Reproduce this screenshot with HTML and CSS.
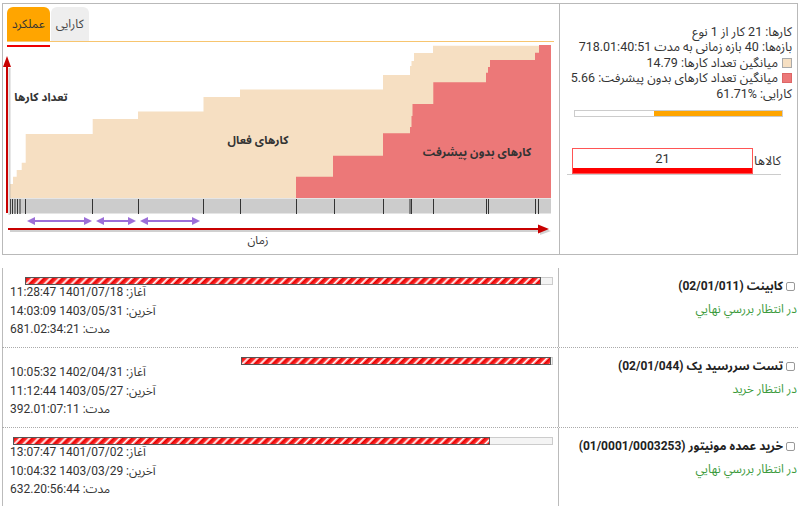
FILE: index.html
```html
<!DOCTYPE html>
<html lang="fa">
<head>
  <meta charset="UTF-8" />
  <meta name="viewport" content="width=device-width, initial-scale=1" />
  <title>عملکرد کارها</title>
  <link rel="stylesheet" href="styles.css">
</head>
<body>

  <div class="panel">
    <div class="chart-cell">
      <div class="tabs">
        <div class="tab active">عملکرد</div>
        <div class="tab">کارایی</div>
      </div>
      <svg class="chart" viewBox="3 42 556 208" width="556" height="208">
        <rect x="7" y="45" width="43" height="2" fill="#e00" />

        <!-- active jobs / jobs without progress -->
        <path class="area-active" d="M10 198V184H13V176.7H16.7V170H21.7V162.7H25.7V134H92.7V119H138V111.5H203.5V97H240V89.5H383V75H410V66H411.5V61H414V53H433V45.7H551V198Z" />
        <path class="area-stalled" d="M296 198V176.7H333V155.7H383V133.3H410V127H411.5V116H412.5V104H433.3V82.3H486V72.7H488V67H490V60H535V52.7H539V45H551V198Z" />

        <!-- timeline -->
        <rect x="10" y="198.5" width="541" height="15" fill="#cccccc" />
        <path class="ticks" d="M10.5 199v15M12.5 199v15M15 199v15M17.5 199v15M20 199v15M25.5 199v15M92.5 199v15M138.5 199v15M203.5 199v15M240.5 199v15M296.5 199v15M334.5 199v15M383.5 199v15M410 199v15M411.5 199v15M433.5 199v15M486.5 199v15M488.5 199v15M535.5 199v15M538.5 199v15" />

        <!-- interval arrows -->
        <g class="interval">
          <path d="M33 221H86" />
          <polygon points="27,221 35,217 35,225" />
          <polygon points="92,221 84,217 84,225" />
          <path d="M102 221H130" />
          <polygon points="96,221 104,217 104,225" />
          <polygon points="136,221 128,217 128,225" />
          <path d="M146 221H194" />
          <polygon points="140,221 148,217 148,225" />
          <polygon points="200,221 192,217 192,225" />
        </g>

        <!-- axes -->
        <g class="axis-shadow">
          <path d="M9.5 68V215" />
          <path d="M10 231H540" />
          <polygon points="551,231 540,227 540,235" />
        </g>
        <g class="axis">
          <path d="M7 64V213" />
          <polygon points="7,56 3,67 11,67" />
          <path d="M8 229H540" />
          <polygon points="549,229 538,224.5 538,233.5" />
        </g>

        <text x="41" y="101">تعداد کارها</text>
        <text x="258" y="144">کارهای فعال</text>
        <text x="477" y="156">کارهای بدون پیشرفت</text>
        <text class="plain" x="258" y="244">زمان</text>
      </svg>
    </div>

    <div class="summary" dir="rtl">
      <div class="line">کارها: 21 کار از 1 نوع</div>
      <div class="line">بازه‌ها: 40 بازه زمانی به مدت 718.01:40:51</div>
      <div class="line"><span class="swatch active"></span>میانگین تعداد کارها: 14.79</div>
      <div class="line"><span class="swatch stalled"></span>میانگین تعداد کارهای بدون پیشرفت: 5.66</div>
      <div class="line">کارایی: %61.71</div>
      <div class="meter"><div class="meter-fill" style="width: 61.71%"></div></div>
      <div class="field">
        <label>کالاها</label>
        <input type="text" value="21" />
      </div>
    </div>
  </div>

  <div class="jobs">
    <div class="job">
      <div class="job-time">
        <div class="track">
          <div class="track-gap" style="width: 2.2%"></div>
          <div class="track-fill" style="width: 95.6%"></div>
          <div class="track-rest" style="width: 2.2%"></div>
        </div>
        <div class="dates" dir="rtl">
          <div>آغاز: 1401/07/18 11:28:47</div>
          <div>آخرین: 1403/05/31 14:03:09</div>
          <div>مدت: 681.02:34:21</div>
        </div>
      </div>
      <div class="job-info" dir="rtl">
        <div class="job-title"><input type="checkbox" />کابینت (02/01/011)</div>
        <div class="job-status">در انتظار بررسي نهايي</div>
      </div>
    </div>

    <div class="job">
      <div class="job-time">
        <div class="track">
          <div class="track-gap" style="width: 42.2%"></div>
          <div class="track-fill" style="width: 57.4%"></div>
          <div class="track-rest" style="width: 0.4%"></div>
        </div>
        <div class="dates" dir="rtl">
          <div>آغاز: 1402/04/31 10:05:32</div>
          <div>آخرین: 1403/05/27 11:12:44</div>
          <div>مدت: 392.01:07:11</div>
        </div>
      </div>
      <div class="job-info" dir="rtl">
        <div class="job-title"><input type="checkbox" />تست سررسید یک (02/01/044)</div>
        <div class="job-status">در انتظار خرید</div>
      </div>
    </div>

    <div class="job">
      <div class="job-time">
        <div class="track">
          <div class="track-fill" style="width: 88.3%"></div>
          <div class="track-rest" style="width: 11.7%"></div>
        </div>
        <div class="dates" dir="rtl">
          <div>آغاز: 1401/07/02 13:07:47</div>
          <div>آخرین: 1403/03/29 10:04:32</div>
          <div>مدت: 632.20:56:44</div>
        </div>
      </div>
      <div class="job-info" dir="rtl">
        <div class="job-title"><input type="checkbox" />خرید عمده مونیتور (01/0001/0003253)</div>
        <div class="job-status">در انتظار بررسي نهايي</div>
      </div>
    </div>
  </div>

</body>
</html>
```

FILE: styles.css
```css
body {
  margin: 0;
  padding: 3px 2px 0;
  font-family: Roboto, "Noto Sans Arabic", "DejaVu Sans", sans-serif;
  font-size: 12px;
  color: #333;
  background-color: #fff;
}

.panel {
  display: flex;
  border: 1px solid #b9b9b9;
}

.chart-cell {
  width: 552px;
  padding: 3px 0 4px 4px;
}

.tabs {
  display: flex;
  gap: 1px;
  margin-right: 5px;
  border-bottom: 1px solid #f7c56f;
}

.tab {
  height: 34px;
  line-height: 34px;
  padding: 0 5px;
  border-radius: 6px 6px 0 0;
  background-color: #eee;
  font-size: 12px;
  color: #444;
}

.tab.active {
  background-color: #ffa500;
  color: #333;
}

.chart {
  display: block;
  margin-left: -4px;
  overflow: visible;
}

.area-active {
  fill: #f6dfc2;
}

.area-stalled {
  fill: #ec7878;
}

.ticks {
  stroke: #333;
  stroke-width: 1;
}

.interval path {
  stroke: #9c6fd8;
  stroke-width: 2;
}

.interval polygon {
  fill: #9c6fd8;
}

.axis path {
  stroke: #c80000;
  stroke-width: 2;
}

.axis polygon {
  fill: #c80000;
}

.axis-shadow path {
  stroke: #999;
  stroke-width: 2;
  opacity: 0.45;
}

.axis-shadow polygon {
  fill: #999;
  opacity: 0.45;
}

.chart text {
  font-family: "Noto Sans Arabic", "DejaVu Sans", sans-serif;
  font-size: 11.5px;
  font-weight: bold;
  fill: #333;
  text-anchor: middle;
}

.chart text.plain {
  font-weight: normal;
}

.summary {
  flex: 1;
  border-left: 1px solid #b9b9b9;
  padding: 19.5px 5px 0;
  font-size: 12.5px;
}

.line {
  line-height: 15.5px;
  white-space: nowrap;
}

.swatch {
  display: inline-block;
  width: 8px;
  height: 8px;
  margin-left: 4px;
  border: 1px solid #aaa;
  vertical-align: -1px;
}

.swatch.active {
  background-color: #f6dfc2;
}

.swatch.stalled {
  background-color: #ec7878;
  border-color: #d66;
}

.meter {
  height: 5px;
  margin: 8.5px 9px 0;
  border: 1px solid #ccc;
  background-color: #fff;
}

.meter-fill {
  height: 100%;
  background-color: #ffa500;
}

.field {
  display: flex;
  align-items: flex-start;
  margin: 31px 11px 0 2px;
  border-bottom: 1px solid #ccc;
}

.field label {
  width: 28px;
  line-height: 26px;
  font-size: 12.5px;
}

.field input {
  width: 181px;
  height: 26px;
  box-sizing: border-box;
  border: 1px solid #f55;
  box-shadow: inset 0 -5px 0 #f00;
  padding: 0 0 4px;
  font-family: Roboto, sans-serif;
  font-size: 13px;
  color: #333;
  text-align: center;
  outline: none;
}

.jobs {
  margin-top: 13px;
}

.job {
  display: flex;
  height: 80px;
  border-bottom: 1px dotted #aaa;
  box-sizing: border-box;
}

.job-time {
  width: 545px;
  padding: 9px 5px 0 5px;
  border-left: 1px solid #bbb;
  border-right: 1px solid #bbb;
}

.track {
  display: flex;
  height: 8px;
  margin-left: 5px;
}

.track-fill {
  box-sizing: border-box;
  border: 1px solid #555;
  background: repeating-linear-gradient(135deg, #e30000 0, #ff3030 3px, #ffffff 4.5px, #ff5050 6px, #e30000 6.4px);
}

.track-rest {
  box-sizing: border-box;
  border: 1px solid #ccc;
  border-left: none;
  background-color: #f4f4f4;
}

.dates {
  margin-top: -2px;
  padding-left: 2px;
  line-height: 18.5px;
  text-align: left;
  color: #333;
}

.job-info {
  flex: 1;
  padding: 10px 3px 0 0;
}

.job-title {
  font-family: Roboto, "Noto Sans Arabic", "DejaVu Sans", sans-serif;
  font-weight: bold;
  font-size: 12px;
  line-height: 16px;
  white-space: nowrap;
  color: #222;
}

.job-title input {
  appearance: none;
  width: 9px;
  height: 9px;
  margin: 0 0 0 3px;
  border: 1px solid #999;
  border-radius: 2px;
  vertical-align: -1px;
}

.job-status {
  margin-top: 3px;
  margin-right: -2px;
  color: #3b9a3b;
  font-size: 12px;
}
```
